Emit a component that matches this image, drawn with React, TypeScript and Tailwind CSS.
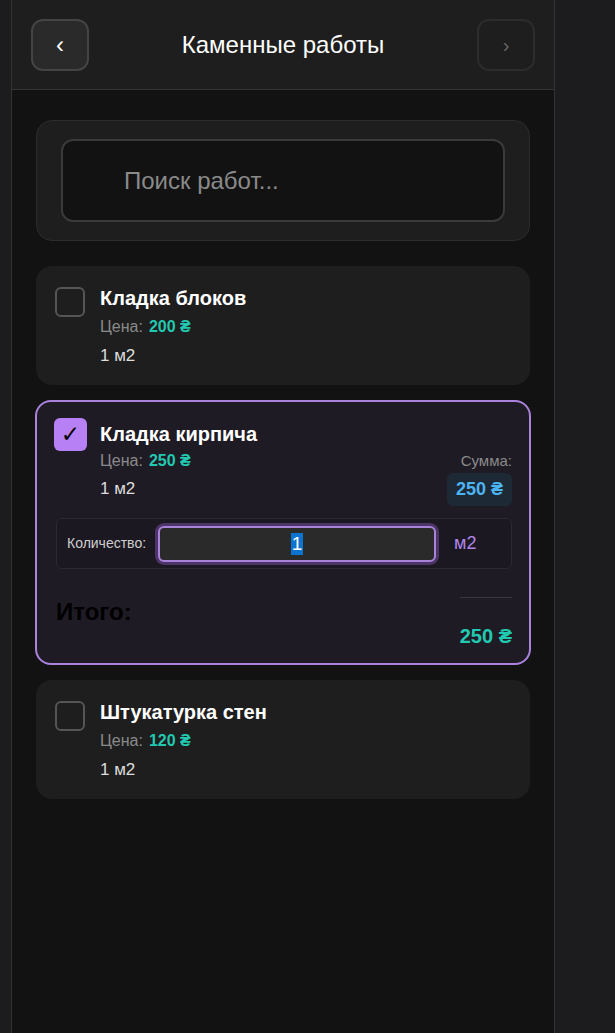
const font = { fontFamily: '"Liberation Sans", Arial, "DejaVu Sans", sans-serif' };

type Work = { id: number; name: string; price: number; unit: string; checked?: boolean };

const works: Work[] = [
  { id: 1, name: 'Кладка блоков', price: 200, unit: '1 м2' },
  { id: 2, name: 'Кладка кирпича', price: 250, unit: '1 м2', checked: true },
  { id: 3, name: 'Штукатурка стен', price: 120, unit: '1 м2' },
];

const PlainCard = ({ w }: { w: Work }) => (
  <div className="flex gap-[15px] rounded-2xl bg-[#1e1e1e] px-[19px] pt-[20px] pb-[19px]">
    <div className="mt-[1px] h-[30px] w-[30px] shrink-0 rounded-md border-2 border-[#555]" />
    <div className="flex flex-col">
      <h3 className="text-[20px] leading-[24px] font-bold text-white">{w.name}</h3>
      <div className="mt-[7px] flex items-center gap-[6px] leading-[20px]">
        <span className="text-[16px] text-[#8a8a8a]">Цена:</span>
        <span className="text-[16px] font-bold text-[#22c9b1]">{w.price} ₴</span>
      </div>
      <p className="mt-[9px] text-[17px] leading-[20px] text-[#dedede]">{w.unit}</p>
    </div>
  </div>
);

const SelectedCard = ({ w }: { w: Work }) => (
  <div className="-mx-px rounded-2xl border-2 border-[#ab82dd] bg-[#1f1b25] px-[17px] pt-[16px] pb-[16px]">
    <div className="flex gap-[13px]">
      <div className="flex h-[33px] w-[33px] shrink-0 items-center justify-center rounded-md bg-[#b880f5] text-[23px] font-bold text-black">
        ✓
      </div>
      <div className="flex flex-1 flex-col">
        <h3 className="mt-[4px] text-[20px] leading-[24px] font-bold text-white">{w.name}</h3>
        <div className="flex items-start justify-between">
          <div className="flex flex-col">
            <div className="mt-[5px] flex items-center gap-[6px] leading-[20px]">
              <span className="text-[16px] text-[#8a8a8a]">Цена:</span>
              <span className="text-[16px] font-bold text-[#22c9b1]">{w.price} ₴</span>
            </div>
            <p className="mt-[8px] text-[17px] leading-[20px] text-[#dedede]">{w.unit}</p>
          </div>
          <div className="flex flex-col items-end">
            <span className="mt-[5px] text-[15px] leading-[20px] text-[#8a8a8a]">Сумма:</span>
            <span className="mt-[2px] rounded-md bg-[#1d2935] px-[9px] py-[6px] text-[18px] leading-[21px] font-bold text-[#4db4f2]">
              {w.price} ₴
            </span>
          </div>
        </div>
      </div>
    </div>

    {/* quantity */}
    <div className="mt-[12px] ml-[2px] flex h-[51px] items-center rounded-md border border-[#2d2834] bg-[#1c1821] px-[10px]">
      <span className="w-[91px] text-[14px] text-[#cfcfcf]">Количество:</span>
      <div className="flex h-[36px] w-[278px] items-center justify-center rounded-md border-2 border-[#a983da] bg-[#2a2a2a] shadow-[0_0_0_3px_#4a3566]">
        <span className="bg-[#0b74d1] px-[1px] text-[19px] leading-[22px] text-white">1</span>
      </div>
      <span className="ml-[18px] text-[18px] text-[#b185ea]">м2</span>
    </div>

    {/* total */}
    <div className="mt-[28px] ml-[2px] flex justify-between">
      <span className="mt-[3px] text-[24px] leading-[24px] font-bold text-black">Итого:</span>
      <div className="flex flex-col items-end">
        <div className="h-px w-[52px] bg-[#3a3540]" />
        <span className="mt-[27px] text-[20px] leading-[22px] font-bold text-[#22c9b1]">{w.price} ₴</span>
      </div>
    </div>
  </div>
);

const App = () => {
  return (
    <main className="min-h-[1033px] w-full bg-[#1c1c1e] pl-[11px]" style={font}>
      <div className="min-h-[1033px] w-[544px] border-x border-[#333] bg-[#121212]">
        {/* Header */}
        <header className="flex h-[90px] items-center justify-between border-b border-[#333] bg-[#1e1e1e] px-[19px]">
          <button className="flex h-[52px] w-[58px] items-center justify-center rounded-xl border-2 border-[#444] bg-[#2a2a2a] text-[24px] text-white">
            ‹
          </button>
          <h1 className="text-[24px] text-white">Каменные работы</h1>
          <button className="flex h-[52px] w-[58px] items-center justify-center rounded-xl border-2 border-[#2c2c2c] bg-[#1e1e1e] text-[20px] text-[#666]">
            ›
          </button>
        </header>

        <div className="flex flex-col px-6 pt-[30px]">
          {/* Search */}
          <div className="rounded-2xl border border-[#2c2c2c] bg-[#1e1e1e] px-[24px] py-[18px]">
            <div className="flex h-[83px] items-center rounded-xl border-2 border-[#3a3a3a] bg-[#121212] pl-[61px]">
              <span className="text-[24px] text-[#8a8a8a]">Поиск работ...</span>
            </div>
          </div>

          <div className="mt-[25px] flex flex-col gap-[15px]">
            {works.map((w) =>
              w.checked ? <SelectedCard key={w.id} w={w} /> : <PlainCard key={w.id} w={w} />
            )}
          </div>
        </div>
      </div>
    </main>
  );
};

export default App;
